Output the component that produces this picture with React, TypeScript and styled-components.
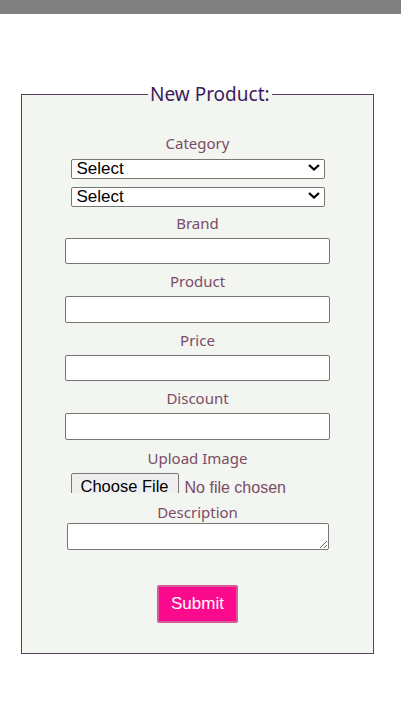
import React from "react";
import styled, { createGlobalStyle } from "styled-components";

const Global = createGlobalStyle`
  html, body { margin: 0; padding: 0; background: #ffffff; }
  body { font-family: "Noto Sans", "Open Sans", sans-serif; }
`;

const TopBar = styled.div`
  height: 14px;
  background: #808080;
`;

const Page = styled.main`
  padding: 67px 0 0 21px;
`;

const Fieldset = styled.fieldset`
  box-sizing: border-box;
  width: 353px;
  height: 573px;
  margin: 0;
  padding: 0 0 30px;
  border: 1px solid #5b3d5f;
  background: #f3f5f0;
  display: flex;
  flex-direction: column;
  align-items: center;
`;

const Legend = styled.legend`
  margin: 0 0 0 126px;
  padding: 0 2px;
  font-size: 19px;
  line-height: 26px;
  color: #3b1c5c;
`;

const Label = styled.label<{ $top?: number; $bottom?: number }>`
  display: block;
  text-align: center;
  font-size: 15px;
  line-height: 20px;
  color: #7a4c68;
  padding-top: ${(p) => p.$top ?? 7}px;
  padding-bottom: ${(p) => p.$bottom ?? 5}px;
`;

const SelectWrap = styled.div<{ $gap?: number }>`
  position: relative;
  width: 254px;
  height: 20px;
  margin-top: ${(p) => p.$gap ?? 0}px;
`;

const Select = styled.select`
  appearance: none;
  box-sizing: border-box;
  width: 100%;
  height: 20px;
  margin: 0;
  padding: 0 0 0 5px;
  border: 1px solid #767676;
  border-radius: 2px;
  background: #ffffff;
  font-family: "Liberation Sans", Arial, sans-serif;
  font-size: 17px;
  line-height: 18px;
  color: #000;
`;

const Chevron = styled.svg`
  position: absolute;
  right: 5px;
  top: 7px;
  pointer-events: none;
`;

const TextInput = styled.input`
  box-sizing: border-box;
  width: 265px;
  height: 27px;
  margin: 0;
  border: 1px solid #767676;
  border-radius: 2px;
  background: #fff;
`;

const FileInput = styled.input`
  box-sizing: border-box;
  width: 254px;
  height: 20px;
  margin: 0;
  overflow: hidden;
  font-family: "Liberation Sans", Arial, sans-serif;
  font-size: 16px;
  line-height: 20px;
  color: #7a4c68;
  &::file-selector-button {
    font-family: "Liberation Sans", Arial, sans-serif;
    font-size: 16.5px;
    color: #000;
    height: 28px;
    margin: 0 6px 0 0;
    padding: 0 9px;
    border: 1px solid #767676;
    border-radius: 2px;
    background: #efefef;
  }
`;

const TextArea = styled.textarea`
  box-sizing: border-box;
  width: 262px;
  height: 28px;
  margin: 0;
  border: 1px solid #767676;
  border-radius: 2px;
  background: #fff;
  resize: both;
`;

const Submit = styled.button`
  box-sizing: border-box;
  width: 81px;
  height: 39px;
  margin-top: 35px;
  border: 2px solid #d75a9d;
  border-radius: 2px;
  background: #fc0a8d;
  color: #ffffff;
  font-family: "Liberation Sans", Arial, sans-serif;
  font-size: 17px;
`;

const ChevronIcon = () => (
  <Chevron width="12" height="7" viewBox="0 0 12 7">
    <path d="M1 1 L6 5.5 L11 1" fill="none" stroke="#000" strokeWidth="2.2" />
  </Chevron>
);

export default function App() {
  return (
    <>
      <Global />
      <TopBar />
      <Page>
        <Fieldset>
          <Legend>New Product:</Legend>
          <Label $top={26} $bottom={4}>Category</Label>
          <SelectWrap>
            <Select defaultValue="">
              <option value="">Select</option>
            </Select>
            <ChevronIcon />
          </SelectWrap>
          <SelectWrap $gap={8}>
            <Select defaultValue="">
              <option value="">Select</option>
            </Select>
            <ChevronIcon />
          </SelectWrap>
          <Label $top={8} $bottom={5}>Brand</Label>
          <TextInput type="text" />
          <Label>Product</Label>
          <TextInput type="text" />
          <Label>Price</Label>
          <TextInput type="text" />
          <Label>Discount</Label>
          <TextInput type="text" />
          <Label $top={8} $bottom={5}>Upload Image</Label>
          <FileInput type="file" />
          <Label $top={9} $bottom={1}>Description</Label>
          <TextArea />
          <Submit type="button">Submit</Submit>
        </Fieldset>
      </Page>
    </>
  );
}
